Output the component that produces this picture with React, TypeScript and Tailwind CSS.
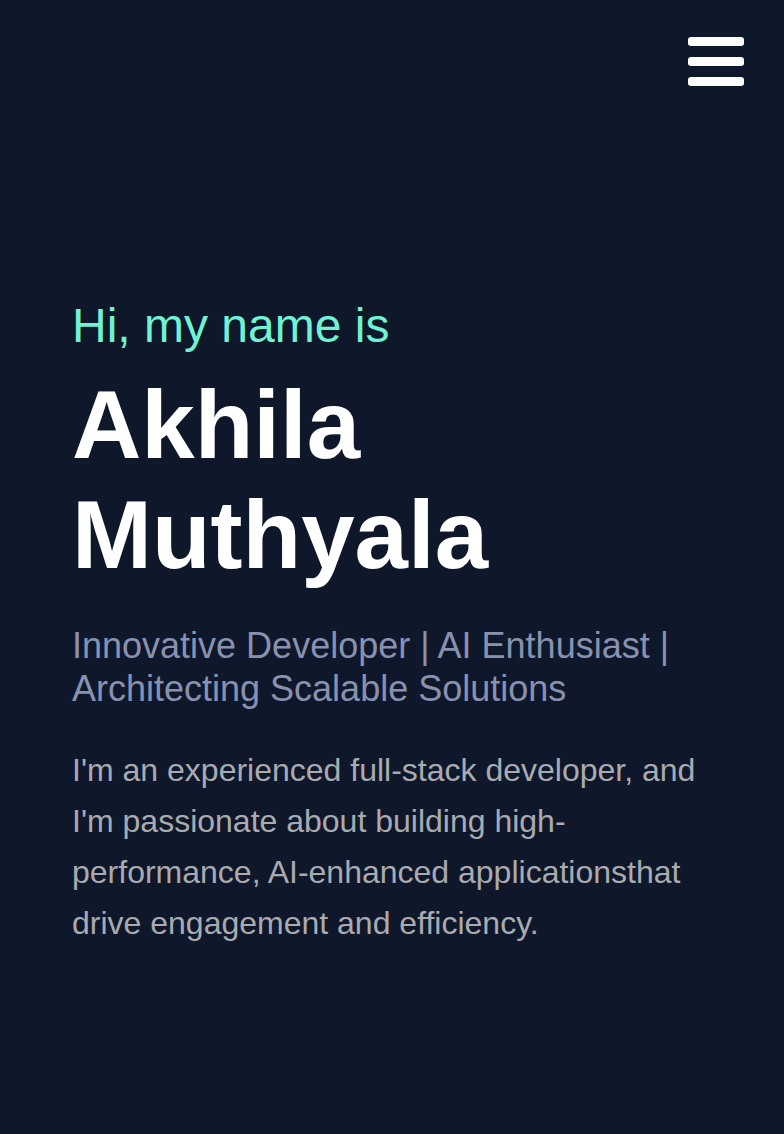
const MenuButton = () => (
  <button aria-label="Open menu" className="flex flex-col gap-[11px]">
    <span className="block w-[56px] h-[9px] rounded-[3px] bg-white" />
    <span className="block w-[56px] h-[9px] rounded-[3px] bg-white" />
    <span className="block w-[56px] h-[9px] rounded-[3px] bg-white" />
  </button>
);

const App = () => {
  return (
    <div className="min-h-[1134px] bg-[#0f182b] font-['Liberation_Sans',Arial,sans-serif]">
      <header className="flex justify-end pt-[37px] pr-[40px]">
        <MenuButton />
      </header>

      <section className="px-[72px] pt-[212px]">
        <p className="text-[48px] leading-[56px] text-[#6ff3d3]">Hi, my name is</p>
        <h1 className="mt-[16px] text-[96px] leading-[110px] font-bold text-white">
          Akhila
          <br />
          Muthyala
        </h1>
        <h2 className="mt-[34px] text-[36px] leading-[43px] text-[#8892b0]">
          Innovative Developer | AI Enthusiast | Architecting Scalable Solutions
        </h2>
        <p className="mt-[35px] text-[32px] leading-[51px] text-[#a9abb0]">
          I'm an experienced full-stack developer, and I'm passionate about building high-performance,
          AI-enhanced applicationsthat drive engagement and efficiency.
        </p>
      </section>
    </div>
  );
};

export default App;
